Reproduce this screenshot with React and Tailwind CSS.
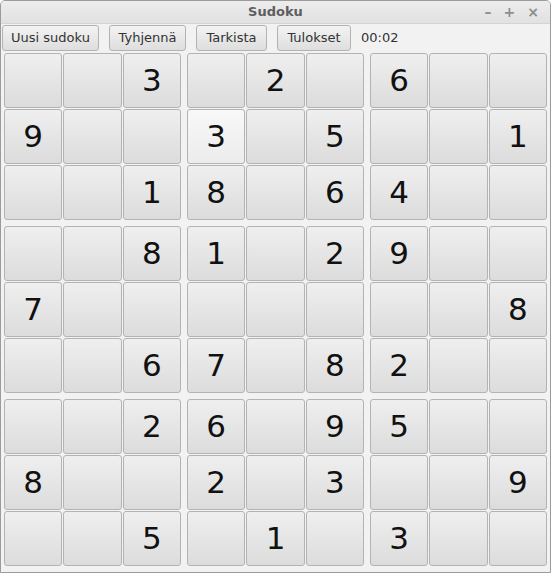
import React from 'react';

const puzzle = [
  '003020600',
  '900305001',
  '001806400',
  '008102900',
  '700000008',
  '006708200',
  '002609500',
  '800203009',
  '005010300',
];

const buttons = [
  { label: 'Uusi sudoku', w: 'w-[97px]' },
  { label: 'Tyhjennä', w: 'w-[77px]' },
  { label: 'Tarkista', w: 'w-[71px]' },
  { label: 'Tulokset', w: 'w-[74px]' },
];

function Cell({ value, hover }) {
  return (
    <div
      className={`flex items-center justify-center border border-[#b3b3b3] rounded-[3px] text-[31px] text-[#111] leading-none bg-gradient-to-b ${
        hover ? 'from-[#f8f8f8] to-[#ececec]' : 'from-[#efefef] to-[#dcdcdc]'
      }`}
    >
      {value !== '0' ? value : ''}
    </div>
  );
}

function Block({ br, bc }) {
  const cells = [];
  for (let r = 0; r < 3; r++) {
    for (let c = 0; c < 3; c++) {
      const row = br * 3 + r;
      const col = bc * 3 + c;
      cells.push(
        <Cell key={`${row}-${col}`} value={puzzle[row][col]} hover={row === 1 && col === 3} />
      );
    }
  }
  return <div className="grid grid-cols-3 grid-rows-[55px_55px_55px] gap-[1px]">{cells}</div>;
}

export default function App() {
  return (
    <div
      className="w-[551px] h-[573px] border border-[#9b9b9b] rounded-t-[5px] bg-[#f2f2f2] flex flex-col overflow-hidden"
      style={{ fontFamily: '"DejaVu Sans", sans-serif' }}
    >
      {/* Title bar */}
      <div className="relative h-[23px] flex items-center justify-center bg-gradient-to-b from-[#ededed] to-[#e1e1e1] border-b border-[#d4d4d4]">
        <span className="text-[13px] font-bold text-[#5e5e5e]">Sudoku</span>
        <div className="absolute right-[11px] top-0 h-full flex items-center gap-[12px] text-[14px] font-bold text-[#8e8e8e]">
          <span>–</span>
          <span>+</span>
          <span>×</span>
        </div>
      </div>

      {/* Toolbar */}
      <div className="flex items-center gap-[10px] pl-[1px] pt-[1px] h-[27px]">
        {buttons.map((b) => (
          <button
            key={b.label}
            className={`${b.w} h-[26px] flex items-center justify-center border border-[#b3b3b3] rounded-[3px] bg-gradient-to-b from-[#f3f3f3] to-[#dedede] text-[13px] text-[#333]`}
          >
            {b.label}
          </button>
        ))}
        <span className="text-[13px] text-[#333]">00:02</span>
      </div>

      {/* Board */}
      <div className="mt-[2px] px-[3px] grid grid-cols-3 gap-[6px]">
        {[0, 1, 2].map((br) =>
          [0, 1, 2].map((bc) => <Block key={`${br}${bc}`} br={br} bc={bc} />)
        )}
      </div>
    </div>
  );
}
